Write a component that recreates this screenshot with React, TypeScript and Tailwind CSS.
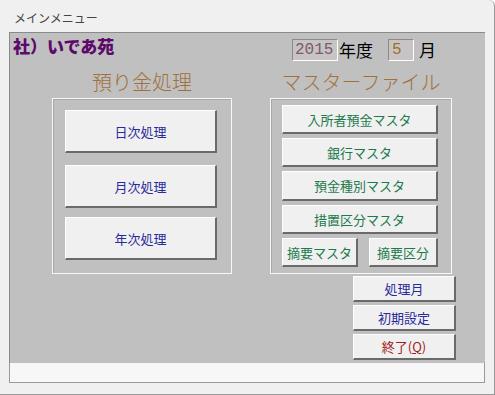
import React from "react";

const jp = { fontFamily: '"Noto Sans CJK JP", "Noto Sans", sans-serif' };

function Btn({
  children,
  className,
  color,
}: {
  children: React.ReactNode;
  className: string;
  color: string;
}) {
  return (
    <div
      className={`flex items-center justify-center bg-[#f0f0f0] border-t border-l border-t-white border-l-white border-r-2 border-b-2 border-r-[#6a6a6a] border-b-[#6a6a6a] text-[13px] leading-none ${color} ${className}`}
    >
      {children}
    </div>
  );
}

export default function App() {
  return (
    <div
      className="w-[495px] h-[395px] bg-[#f0f0f0] border-r border-b border-[#9a9a9a] rounded-tr-[6px] overflow-hidden flex flex-col"
      style={jp}
    >
      <div className="h-[32px] flex items-center pl-[14px] pt-[4px] text-[12px] text-[#444]">
        メインメニュー
      </div>
      <div className="ml-[9px] w-[476px] h-[331px] bg-[#c0c0c0] border-l border-t border-[#8a8a8a] flex flex-col">
        <div className="flex h-[32px]">
          <div className="w-[282px] pl-[3px] pt-[2px] text-[17px] font-black text-[#5c0a6a] leading-tight">
            社）いであ苑
          </div>
          <div className="flex items-start pt-[6px]">
            <div
              className="w-[46px] h-[22px] bg-[#c8c4c4] border border-t-[#8a8a8a] border-l-[#8a8a8a] border-r-white border-b-white flex items-center pl-[2px] text-[16px] text-[#7a5a72]"
              style={{ fontFamily: '"Liberation Mono", monospace' }}
            >
              2015
            </div>
            <div className="ml-[1px] text-[17px] leading-[22px] text-black">年度</div>
            <div
              className="ml-[15px] w-[26px] h-[22px] bg-[#c8c4c4] border border-t-[#8a8a8a] border-l-[#8a8a8a] border-r-white border-b-white flex items-center pl-[3px] text-[16px] text-[#9a7030]"
              style={{ fontFamily: '"Liberation Mono", monospace' }}
            >
              5
            </div>
            <div className="ml-[5px] text-[17px] leading-[22px] text-black">月</div>
          </div>
        </div>
        <div className="flex">
          <div className="ml-[42px] w-[180px] flex flex-col">
            <div className="h-[33px] flex items-center justify-center text-[20px] font-light text-[#a0703a]">
              預り金処理
            </div>
            <div className="h-[176px] border border-[#f8f8f8] shadow-[inset_1px_1px_0_#a8a8a8] px-[12px] pt-[11px]">
              <Btn className="w-[152px] h-[43px]" color="text-[#2a2a9a]">
                日次処理
              </Btn>
              <Btn className="w-[152px] h-[43px] mt-[12px]" color="text-[#2a2a9a]">
                月次処理
              </Btn>
              <Btn className="w-[152px] h-[43px] mt-[9px]" color="text-[#2a2a9a]">
                年次処理
              </Btn>
            </div>
          </div>
          <div className="ml-[38px] w-[182px] flex flex-col">
            <div className="h-[33px] flex items-center justify-center text-[20px] font-light text-[#a0703a]">
              マスターファイル
            </div>
            <div className="h-[176px] border border-[#f8f8f8] shadow-[inset_1px_1px_0_#a8a8a8] pl-[11px] pt-[6px] flex flex-col gap-[4px]">
              <Btn className="w-[156px] h-[29px]" color="text-[#1d7a4c]">
                入所者預金マスタ
              </Btn>
              <Btn className="w-[156px] h-[29px]" color="text-[#1d7a4c]">
                銀行マスタ
              </Btn>
              <Btn className="w-[156px] h-[30px]" color="text-[#1d7a4c]">
                預金種別マスタ
              </Btn>
              <Btn className="w-[156px] h-[29px]" color="text-[#1d7a4c]">
                措置区分マスタ
              </Btn>
              <div className="flex">
                <Btn className="w-[76px] h-[29px]" color="text-[#1d7a4c]">
                  摘要マスタ
                </Btn>
                <Btn className="w-[69px] h-[29px] ml-[11px]" color="text-[#1d7a4c]">
                  摘要区分
                </Btn>
              </div>
            </div>
          </div>
        </div>
        <div className="ml-[343px] mt-[2px] flex flex-col gap-[3px]">
          <Btn className="w-[103px] h-[26px]" color="text-[#2a2a9a]">
            処理月
          </Btn>
          <Btn className="w-[103px] h-[26px]" color="text-[#2a2a9a]">
            初期設定
          </Btn>
          <Btn className="w-[103px] h-[26px]" color="text-[#a02020]">
            終了(<span className="underline">Q</span>)
          </Btn>
        </div>
      </div>
      <div className="ml-[9px] w-[476px] h-[20px] bg-[#f7f7f7] border-l border-b border-r border-[#9a9a9a]"></div>
    </div>
  );
}
